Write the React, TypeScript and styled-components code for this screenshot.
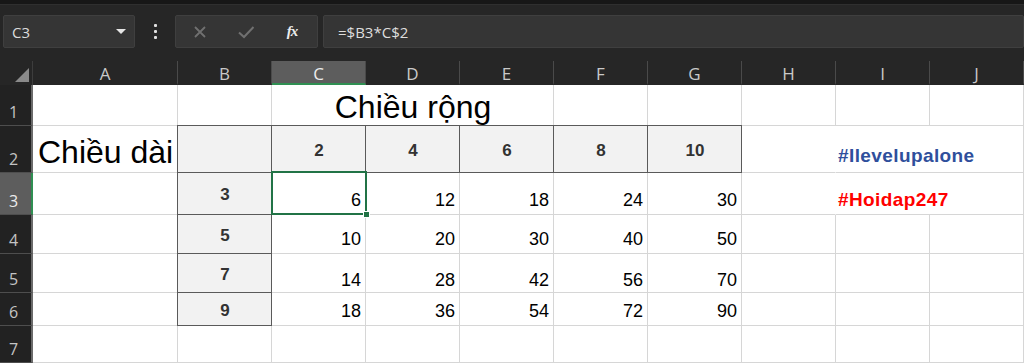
import React from "react";
import styled, { createGlobalStyle } from "styled-components";

const GlobalStyle = createGlobalStyle`
  html, body {
    margin: 0;
    padding: 0;
    background: #ffffff;
  }
  body {
    font-family: "Liberation Sans", Arial, sans-serif;
  }
`;

const Window = styled.div`
  width: 1024px;
  height: 363px;
  overflow: hidden;
  display: flex;
  flex-direction: column;
  background: #ffffff;
`;

const TopStrip = styled.div`
  height: 4px;
  background: #171717;
  border-bottom: 1px solid #2f2f2f;
`;

const FormulaBar = styled.div`
  height: 56px;
  box-sizing: border-box;
  display: flex;
  align-items: flex-start;
  padding: 10px 0 0 3px;
  background: #262626;
  font-family: "Open Sans", "Liberation Sans", sans-serif;
`;

const Box = styled.div<{ $width?: number }>`
  height: 33px;
  box-sizing: border-box;
  display: flex;
  align-items: center;
  background: #353535;
  border: 1px solid #3f3f3f;
  border-radius: 2px;
  ${(p) => (p.$width ? `width: ${p.$width}px;` : "flex: 1;")}
`;

const NameText = styled.span`
  flex: 1;
  padding-left: 8px;
  color: #dcdcdc;
  font-size: 15px;
`;

const Caret = styled.span`
  width: 0;
  height: 0;
  margin-right: 8px;
  border-left: 5px solid transparent;
  border-right: 5px solid transparent;
  border-top: 5px solid #e6e6e6;
`;

const Dots = styled.div`
  width: 40px;
  height: 33px;
  display: flex;
  flex-direction: column;
  align-items: center;
  justify-content: center;
  gap: 3px;
  span {
    width: 3px;
    height: 3px;
    border-radius: 1px;
    background: #e0e0e0;
  }
`;

const IconSlot = styled.div<{ $width: number }>`
  width: ${(p) => p.$width}px;
  display: flex;
  align-items: center;
  justify-content: center;
`;

const Fx = styled.span`
  font-family: "Liberation Serif", "DejaVu Serif", serif;
  font-style: italic;
  font-weight: bold;
  font-size: 15px;
  color: #ececec;
  letter-spacing: -1px;
`;

const FormulaText = styled.span`
  padding-left: 14px;
  color: #dedede;
  font-size: 15px;
`;

const Gap = styled.div<{ $w: number }>`
  width: ${(p) => p.$w}px;
`;

const Sheet = styled.div`
  display: grid;
  grid-template-columns: 33px 145px repeat(9, 94px);
  grid-template-rows: 24px 41px 47px 42px 39px 39px 33px 37px;
`;

const Corner = styled.div`
  background: #262626;
  border-right: 1px solid #3d3d3d;
  display: flex;
  align-items: flex-end;
  justify-content: flex-end;
  padding: 0 3px 3px 0;
  box-sizing: border-box;
`;

const ColHead = styled.div<{ $active?: boolean }>`
  box-sizing: border-box;
  display: flex;
  align-items: center;
  justify-content: center;
  padding-top: 2px;
  background: ${(p) => (p.$active ? "#5d5d5d" : "#262626")};
  color: ${(p) => (p.$active ? "#ececec" : "#c9c9c9")};
  border-right: 1px solid #4a4a4a;
  border-bottom: 2px solid ${(p) => (p.$active ? "#2f8f52" : "#262626")};
  font-family: "Open Sans", "Liberation Sans", sans-serif;
  font-size: 17px;
`;

const RowHead = styled.div<{ $active?: boolean }>`
  box-sizing: border-box;
  display: flex;
  align-items: flex-end;
  justify-content: center;
  padding: 0 4px 2px 0;
  background: ${(p) => (p.$active ? "#5d5d5d" : "#222222")};
  color: ${(p) => (p.$active ? "#ececec" : "#c4c4c4")};
  border-bottom: 1px solid #4e4e4e;
  border-right: 2px solid ${(p) => (p.$active ? "#2f8f52" : "#6a6a6a")};
  font-family: "Open Sans", "Liberation Sans", sans-serif;
  font-size: 16px;
`;

type HAlign = "left" | "center" | "right";

const Cell = styled.div<{
  $h?: HAlign;
  $mid?: boolean;
  $span?: number;
  $boxed?: boolean;
  $noRight?: boolean;
  $size?: number;
  $bold?: boolean;
  $color?: string;
  $padBottom?: number;
  $padLeft?: number;
  $spacing?: number;
  $tight?: boolean;
}>`
  box-sizing: border-box;
  position: relative;
  display: flex;
  align-items: ${(p) => (p.$mid ? "center" : "flex-end")};
  justify-content: ${(p) =>
    p.$h === "left" ? "flex-start" : p.$h === "center" ? "center" : "flex-end"};
  grid-column: span ${(p) => p.$span ?? 1};
  padding: ${(p) => (p.$mid ? 5 : 0)}px 4px ${(p) => p.$padBottom ?? 2}px
    ${(p) => p.$padLeft ?? 5}px;
  white-space: nowrap;
  background: ${(p) => (p.$boxed ? "#f2f2f2" : "#ffffff")};
  border-right: 1px solid
    ${(p) => (p.$boxed ? "#5a5a5a" : p.$noRight ? "transparent" : "#d6d6d6")};
  border-bottom: 1px solid ${(p) => (p.$boxed ? "#5a5a5a" : "#d6d6d6")};
  ${(p) =>
    p.$boxed &&
    "box-shadow: -1px 0 0 0 #5a5a5a, 0 -1px 0 0 #5a5a5a, -1px -1px 0 0 #5a5a5a;"}
  font-size: ${(p) => p.$size ?? 18}px;
  font-weight: ${(p) => (p.$bold ? 700 : 400)};
  letter-spacing: ${(p) => p.$spacing ?? 0}px;
  color: ${(p) => p.$color ?? "#000000"};
  line-height: ${(p) => (p.$tight ? 1.05 : 1.15)};
`;

const Selection = styled.div`
  position: absolute;
  top: -2px;
  left: -1px;
  right: -2px;
  bottom: -1px;
  border: 2px solid #217346;
  z-index: 2;
  pointer-events: none;
`;

const Handle = styled.div`
  position: absolute;
  right: -5px;
  bottom: -5px;
  width: 5px;
  height: 5px;
  background: #217346;
  border: 1px solid #ffffff;
`;

const columns = ["A", "B", "C", "D", "E", "F", "G", "H", "I", "J"];
const widths = [2, 4, 6, 8, 10];
const lengths = [3, 5, 7, 9];

function Blank({ n }: { n: number }) {
  return (
    <>
      {Array.from({ length: n }).map((_, i) => (
        <Cell key={i} />
      ))}
    </>
  );
}

export default function App() {
  return (
    <Window>
      <GlobalStyle />
      <TopStrip />
      <FormulaBar>
        <Box $width={132}>
          <NameText>C3</NameText>
          <Caret />
        </Box>
        <Dots>
          <span />
          <span />
          <span />
        </Dots>
        <Box $width={143}>
          <IconSlot $width={48}>
            <svg width="14" height="14" viewBox="0 0 14 14">
              <path d="M2 2 L12 12 M12 2 L2 12" stroke="#707070" strokeWidth="1.8" />
            </svg>
          </IconSlot>
          <IconSlot $width={44}>
            <svg width="18" height="14" viewBox="0 0 18 14">
              <path
                d="M2 7.5 L7 12 L16.5 2"
                stroke="#707070"
                strokeWidth="2"
                fill="none"
              />
            </svg>
          </IconSlot>
          <IconSlot $width={48}>
            <Fx>fx</Fx>
          </IconSlot>
        </Box>
        <Gap $w={5} />
        <Box>
          <FormulaText>=$B3*C$2</FormulaText>
        </Box>
      </FormulaBar>

      <Sheet>
        <Corner>
          <svg width="14" height="14" viewBox="0 0 14 14">
            <path d="M14 0 L14 14 L0 14 Z" fill="#8a8a8a" />
          </svg>
        </Corner>
        {columns.map((c) => (
          <ColHead key={c} $active={c === "C"}>
            {c}
          </ColHead>
        ))}

        <RowHead>1</RowHead>
        <Cell />
        <Cell />
        <Cell $span={3} $h="center" $size={32} $padBottom={0} $tight>
          Chiều rộng
        </Cell>
        <Blank n={5} />

        <RowHead>2</RowHead>
        <Cell $h="left" $size={32} $padBottom={1}>
          Chiều dài
        </Cell>
        <Cell $boxed />
        {widths.map((w) => (
          <Cell key={w} $boxed $mid $h="center" $bold $size={17} $color="#333333">
            {w}
          </Cell>
        ))}
        <Cell $noRight />
        <Cell
          $span={2}
          $h="left"
          $bold
          $size={19}
          $spacing={0.4}
          $padLeft={2}
          $color="#2f4f9c"
          $padBottom={5}
        >
          #Ilevelupalone
        </Cell>

        {lengths.map((l, r) => (
          <React.Fragment key={l}>
            <RowHead $active={r === 0}>{r + 3}</RowHead>
            <Cell />
            <Cell $boxed $mid $h="center" $bold $size={17} $color="#333333">
              {l}
            </Cell>
            {widths.map((w, i) => (
              <Cell key={w} $padBottom={r === 2 ? 1 : 3}>
                {l * w}
                {r === 0 && i === 0 && (
                  <Selection>
                    <Handle />
                  </Selection>
                )}
              </Cell>
            ))}
            {r === 0 ? (
              <>
                <Cell $noRight />
                <Cell
                  $span={2}
                  $h="left"
                  $bold
                  $size={19}
                  $spacing={0.4}
                  $padLeft={2}
                  $color="#ff0000"
                  $padBottom={3}
                >
                  #Hoidap247
                </Cell>
              </>
            ) : (
              <Blank n={3} />
            )}
          </React.Fragment>
        ))}

        <RowHead>7</RowHead>
        <Blank n={10} />
      </Sheet>
    </Window>
  );
}
